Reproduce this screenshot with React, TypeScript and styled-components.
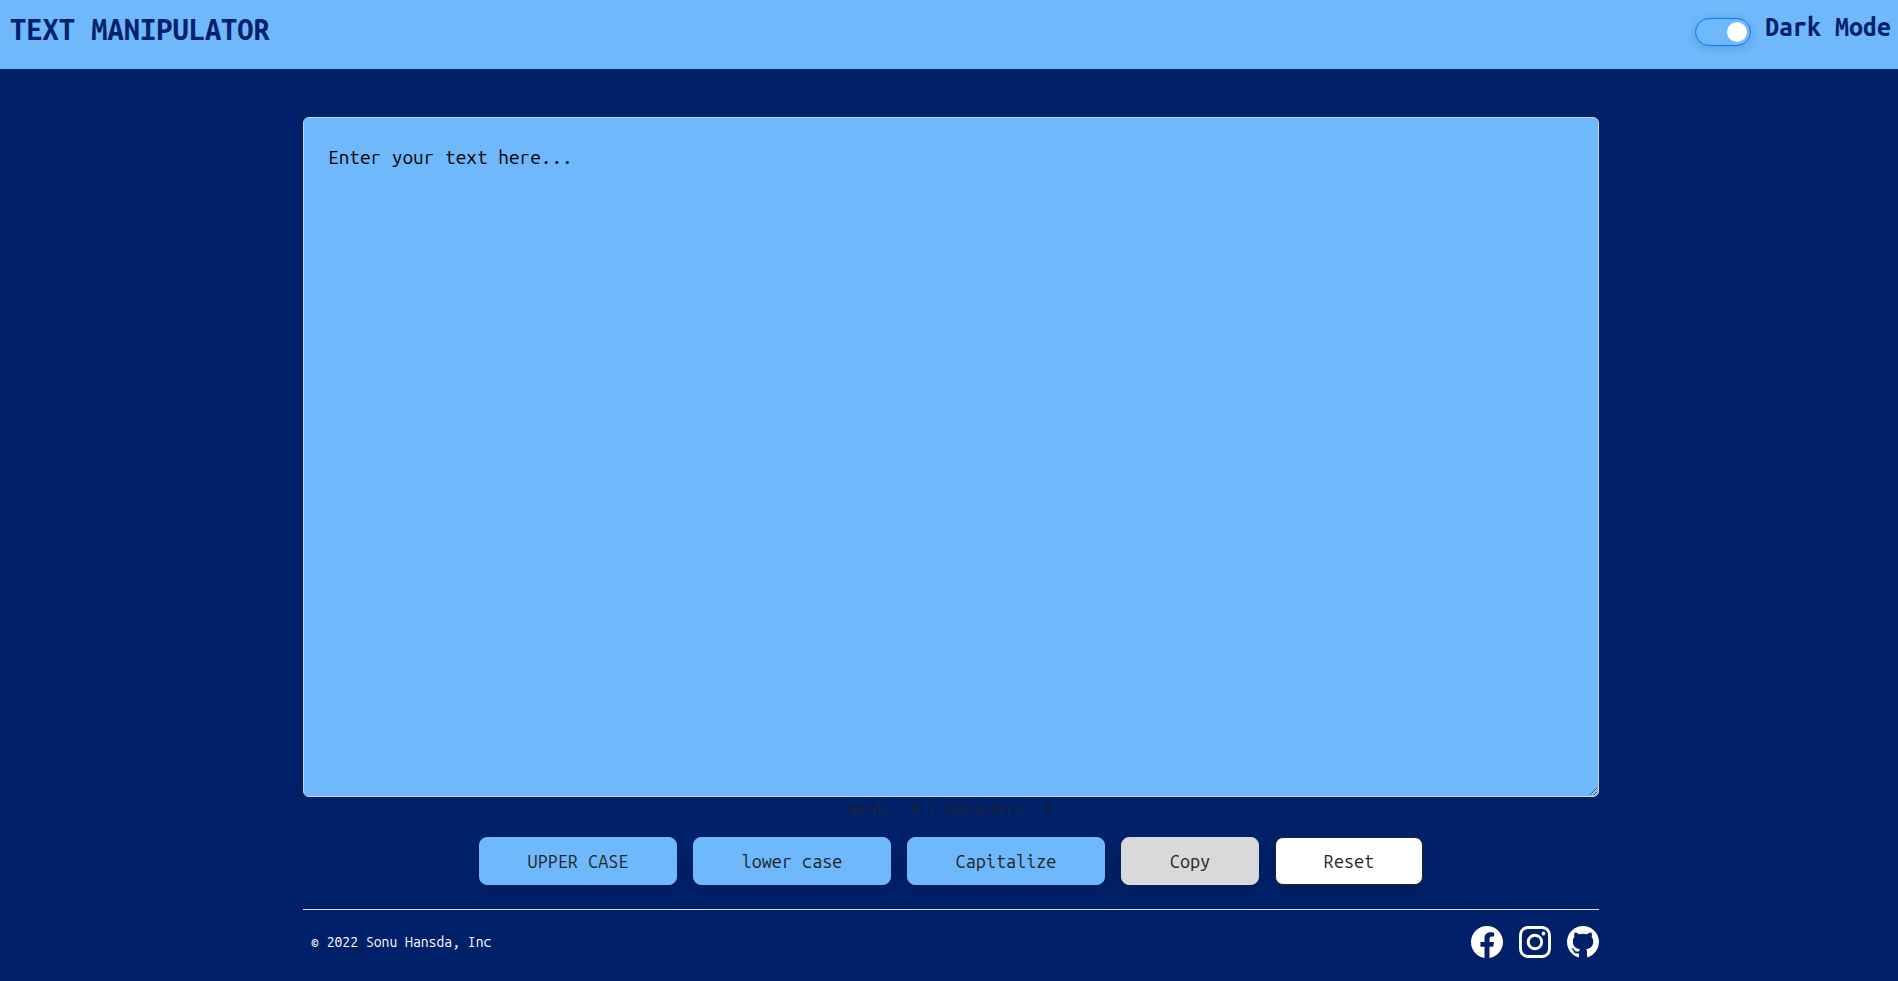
import React, { useState } from "react";
import styled, { createGlobalStyle } from "styled-components";
import { BsFacebook, BsGithub, BsInstagram } from "react-icons/bs";

const colors = {
  navy: "#00216a",
  sky: "#6fb8fb",
  gray: "#d9d9d9",
  ink: "#212529",
  line: "#ced4da",
};

const GlobalStyle = createGlobalStyle`
  *, *::before, *::after { box-sizing: border-box; }
  body {
    margin: 0;
    background: ${colors.navy};
    color: ${colors.ink};
    font-family: "Ubuntu Mono", "Ubuntu Sans Mono", "DejaVu Sans Mono", monospace;
    font-size: 14px;
    line-height: 24px;
  }
`;

const Header = styled.header`
  display: flex;
  justify-content: space-between;
  align-items: flex-start;
  padding: 9px 7px 20px 10px;
  background: ${colors.sky};
  color: ${colors.navy};
`;

const Title = styled.h1`
  margin: 0;
  font-size: 29px;
  line-height: 40px;
  font-weight: 700;
`;

const ModeSwitch = styled.label`
  display: flex;
  align-items: flex-start;
  gap: 14px;
  cursor: pointer;
`;

const ModeName = styled.span`
  font-size: 25px;
  line-height: 36px;
  font-weight: 700;
`;

const Toggle = styled.input`
  appearance: none;
  display: flex;
  align-items: center;
  width: 56px;
  height: 28px;
  margin: 9px 0 0;
  padding: 0 3px;
  border: 1px solid #007bff;
  border-radius: 14px;
  box-shadow: 0 2px 10px rgba(0, 0, 0, 0.15);
  cursor: pointer;

  &::before {
    content: "";
    width: 20px;
    height: 20px;
    border-radius: 50%;
    background: #fff;
  }

  &:checked {
    justify-content: flex-end;
  }
`;

const Page = styled.div`
  max-width: 1324px;
  margin: 0 auto;
  padding: 48px 12px 0 16px;
`;

const Editor = styled.textarea`
  display: block;
  width: 100%;
  height: 680px;
  padding: 24px;
  border: 1px solid ${colors.line};
  border-radius: 6px;
  outline: none;
  resize: vertical;
  background: ${colors.sky};
  color: #000;
  font-family: inherit;
  font-size: 19px;
  line-height: 30px;

  &::placeholder {
    color: #000;
    opacity: 1;
  }
`;

const Counter = styled.p`
  margin: 0;
  text-align: center;
`;

const Actions = styled.div`
  display: flex;
  flex-wrap: wrap;
  justify-content: center;
  gap: 16px;
  margin: 16px 0 24px;
`;

const ActionButton = styled.button<{ $fill: string; $width: number; $edge?: string }>`
  width: ${(p) => p.$width}px;
  height: 48px;
  padding: 0;
  border: 1px solid ${(p) => p.$edge ?? p.$fill};
  border-radius: 8px;
  background: ${(p) => p.$fill};
  color: ${colors.ink};
  box-shadow: 0 8px 16px rgba(0, 0, 0, 0.15);
  font-family: inherit;
  font-size: 18px;
  line-height: 30px;
  cursor: pointer;
`;

const Footer = styled.footer`
  display: flex;
  justify-content: space-between;
  align-items: center;
  padding: 16px 0 16px 8px;
  border-top: 1px solid #dee2e6;
  color: #fff;
`;

const SocialLinks = styled.nav`
  display: flex;
  gap: 16px;
`;

const SocialLink = styled.a`
  display: flex;
  color: #fff;
  font-size: 32px;
`;

const capitalize = (value: string) =>
  value.toLowerCase().replace(/(^|\s)\S/g, (letter) => letter.toUpperCase());

export default function App() {
  const [text, setText] = useState("");
  const [dark, setDark] = useState(true);
  const words = text.split(/\s+/).filter(Boolean).length;

  return (
    <>
      <GlobalStyle />
      <Header>
        <Title>TEXT MANIPULATOR</Title>
        <ModeSwitch>
          <Toggle type="checkbox" checked={dark} onChange={(e) => setDark(e.target.checked)} />
          <ModeName>Dark Mode</ModeName>
        </ModeSwitch>
      </Header>
      <Page>
        <main>
          <Editor
            aria-label="Text"
            placeholder="Enter your text here..."
            value={text}
            onChange={(e) => setText(e.target.value)}
          />
          <Counter>
            Words : {words} | Characters : {text.length}
          </Counter>
          <Actions>
            <ActionButton $fill={colors.sky} $width={198} onClick={() => setText(text.toUpperCase())}>
              UPPER CASE
            </ActionButton>
            <ActionButton $fill={colors.sky} $width={198} onClick={() => setText(text.toLowerCase())}>
              lower case
            </ActionButton>
            <ActionButton $fill={colors.sky} $width={198} onClick={() => setText(capitalize(text))}>
              Capitalize
            </ActionButton>
            <ActionButton $fill={colors.gray} $width={138} onClick={() => navigator.clipboard?.writeText(text)}>
              Copy
            </ActionButton>
            <ActionButton $fill="#fff" $edge={colors.ink} $width={148} onClick={() => setText("")}>
              Reset
            </ActionButton>
          </Actions>
        </main>
        <Footer>
          <span>© 2022 Sonu Hansda, Inc</span>
          <SocialLinks aria-label="Social links">
            <SocialLink href="#facebook" aria-label="Facebook"><BsFacebook /></SocialLink>
            <SocialLink href="#instagram" aria-label="Instagram"><BsInstagram /></SocialLink>
            <SocialLink href="#github" aria-label="GitHub"><BsGithub /></SocialLink>
          </SocialLinks>
        </Footer>
      </Page>
    </>
  );
}
